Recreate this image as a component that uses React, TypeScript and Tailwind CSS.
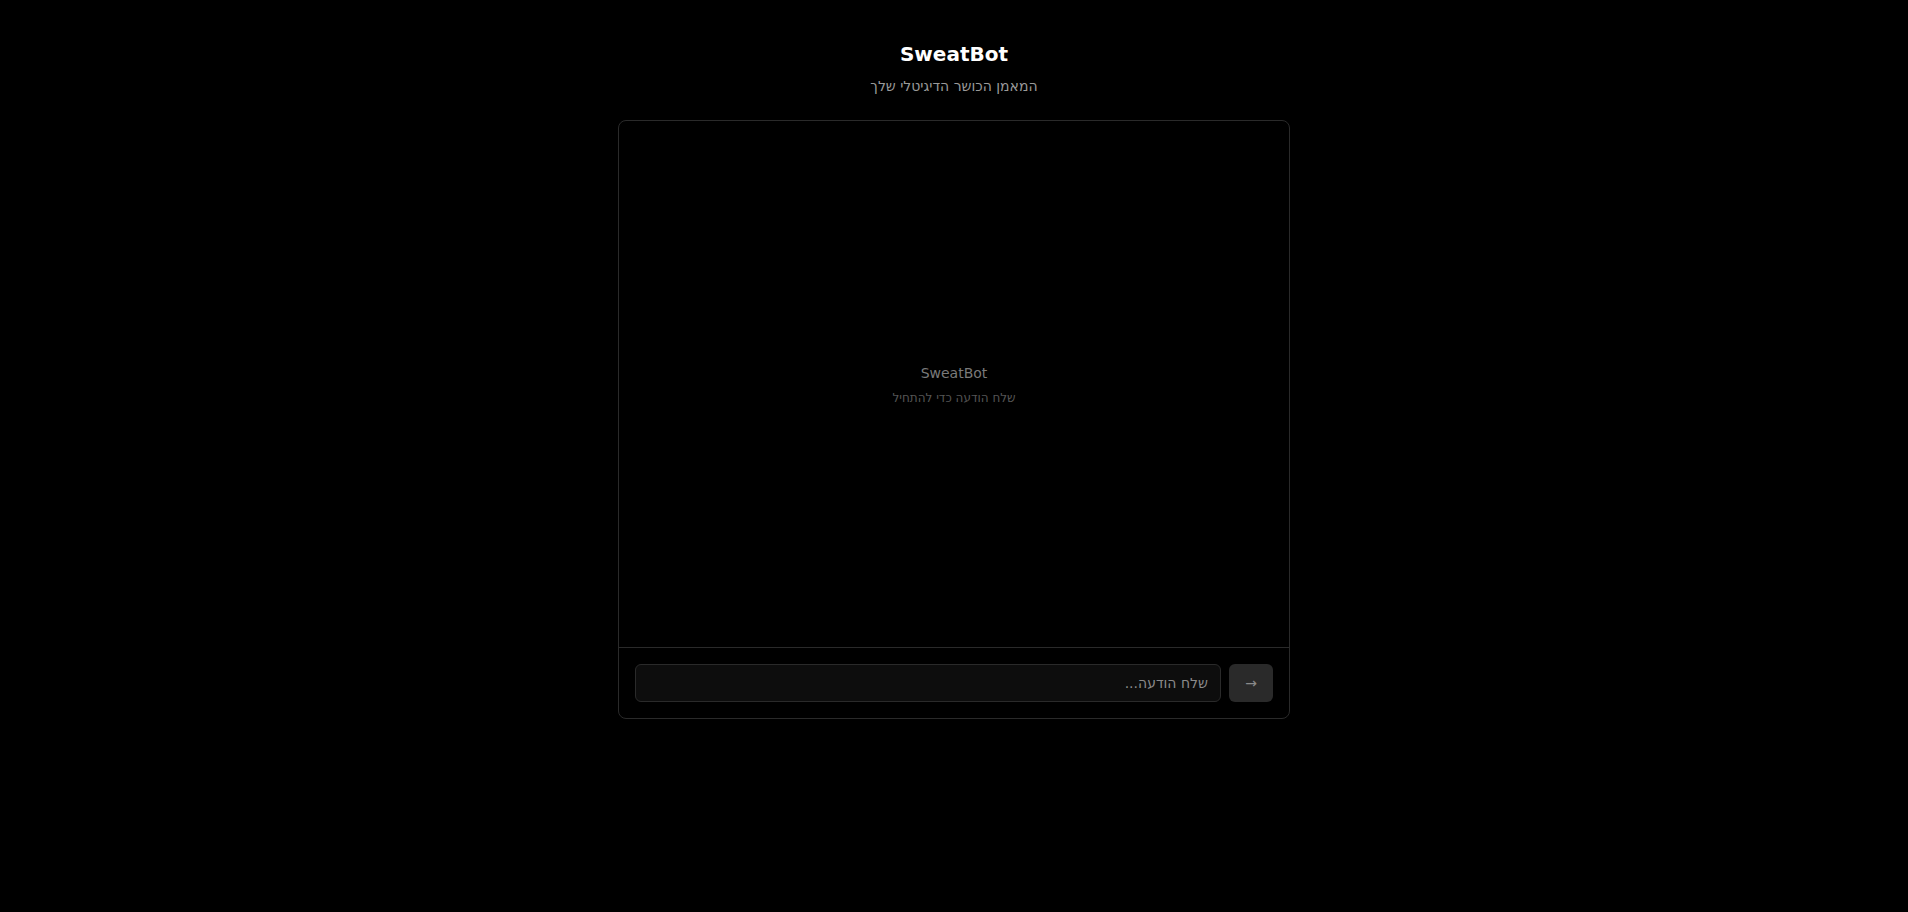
export default function App() {
  return (
    <div
      className="min-h-screen bg-black text-white flex flex-col items-center pt-10"
      style={{ fontFamily: '"DejaVu Sans", sans-serif' }}
    >
      {/* Header */}
      <h1 className="text-xl font-bold leading-7 text-white">SweatBot</h1>
      <p dir="rtl" className="mt-2 text-sm leading-5 text-[#9a9a9a]">
        המאמן הכושר הדיגיטלי שלך
      </p>

      {/* Chat card */}
      <div className="mt-6 w-[672px] h-[599px] flex flex-col border border-[#2a2a2a] rounded-lg bg-black">
        <div className="flex-1 flex flex-col items-center justify-center">
          <div className="text-sm text-[#7a7a7a]">SweatBot</div>
          <div dir="rtl" className="mt-[7px] text-xs text-[#555]">
            שלח הודעה כדי להתחיל
          </div>
        </div>
        <div className="border-t border-[#2a2a2a] p-4 flex gap-2">
          <input
            dir="rtl"
            placeholder="שלח הודעה..."
            className="flex-1 h-[38px] px-3 rounded-md bg-[#0d0d0d] border border-[#2a2a2a] text-sm text-white placeholder:text-[#8a8a8a] outline-none"
          />
          <button className="w-11 h-[38px] rounded-md bg-[#2a2a2a] text-[#8a8a8a] text-sm flex items-center justify-center">
            →
          </button>
        </div>
      </div>
    </div>
  );
}
